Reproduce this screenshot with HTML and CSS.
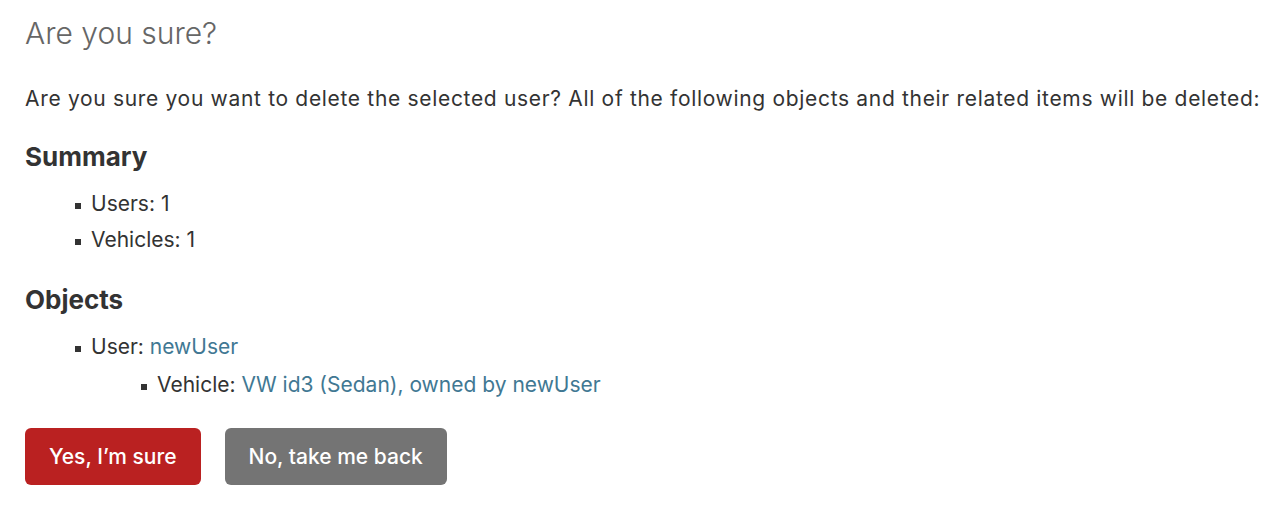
FILE: index.html
```html
<!DOCTYPE html>
<html lang="en">
<head>
<meta charset="utf-8">
<title>Are you sure?</title>
<link rel="stylesheet" href="styles.css">
</head>
<body>
<div class="content">
  <h1 class="title">Are you sure?</h1>
  <p class="lead">Are you sure you want to delete the selected user? All of the following objects and their related items will be deleted:</p>
  <h2 class="section">Summary</h2>
  <ul class="list">
    <li class="item">Users: 1</li>
    <li class="item">Vehicles: 1</li>
  </ul>
  <h2 class="section section-objects">Objects</h2>
  <ul class="list list-objects">
    <li class="item">User: <a class="link" href="#">newUser</a>
      <ul class="list list-nested">
        <li class="item">Vehicle: <a class="link" href="#">VW id3 (Sedan), owned by newUser</a></li>
      </ul>
    </li>
  </ul>
  <div class="actions">
    <button class="btn btn-delete" type="button">Yes, I’m sure</button>
    <button class="btn btn-cancel" type="button">No, take me back</button>
  </div>
</div>
</body>
</html>
```

FILE: styles.css
```css
html, body {
  margin: 0;
  padding: 0;
  background: #fff;
}

body {
  font-family: Inter, "Noto Sans", "Liberation Sans", sans-serif;
  color: #333;
}

.content {
  padding: 15px 25px 0 25px;
}

.title {
  margin: 0;
  font-size: 30px;
  line-height: 36px;
  font-weight: 300;
  color: #666;
}

.lead {
  margin: 33px 0 0 0;
  font-size: 21px;
  line-height: 30px;
  letter-spacing: 0.68px;
  white-space: nowrap;
  color: #333;
}

.section {
  margin: 28px 0 0 0;
  font-size: 26px;
  line-height: 30px;
  font-weight: 700;
  color: #333;
}

.section-objects {
  margin-top: 27px;
}

.list {
  list-style: none;
  margin: 14px 0 0 0;
  padding: 0 0 0 66px;
}

.list-objects {
  margin-top: 14px;
}

.list-nested {
  margin-top: 2px;
}

.item {
  position: relative;
  font-size: 21px;
  line-height: 36px;
  color: #333;
}

.item::before {
  content: "";
  position: absolute;
  left: -16px;
  top: 17px;
  width: 6px;
  height: 6px;
  background: #333;
}

.link {
  color: #417893;
  text-decoration: none;
}

.actions {
  display: flex;
  gap: 24px;
  margin-top: 25px;
}

.btn {
  font-family: inherit;
  font-size: 21px;
  font-weight: 500;
  line-height: 26px;
  color: #fff;
  border: none;
  border-radius: 6px;
  padding: 15px 24px;
  height: 57px;
  cursor: pointer;
}

.btn-delete {
  background: #ba2121;
}

.btn-cancel {
  background: #747474;
}
```
